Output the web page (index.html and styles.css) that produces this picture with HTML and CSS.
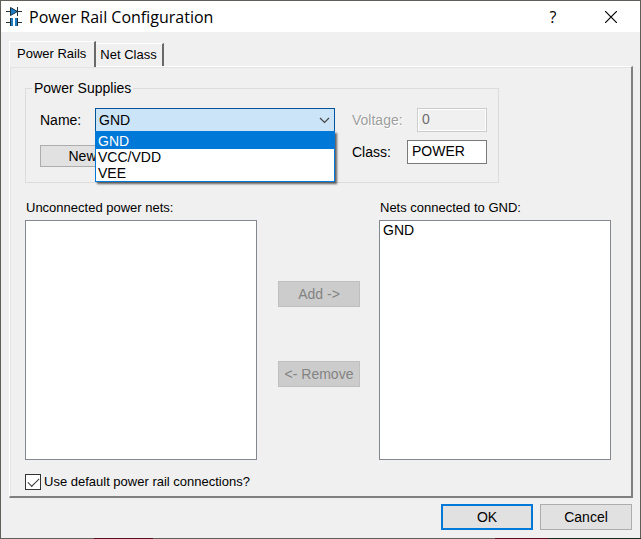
FILE: index.html
```
<!DOCTYPE html>
<html lang="en">
<head>
<meta charset="utf-8">
<title>Power Rail Configuration</title>
<link rel="stylesheet" href="styles.css">
</head>
<body>
<main class="dialog">
  <header class="titlebar">
    <svg class="app-icon" width="16" height="20" viewBox="0 0 16 20" aria-hidden="true">
      <path d="M0 4.500h16M0 15.500h4M12 15.500h4" stroke="#26313a" fill="none"/>
      <path d="M4.500 0.500v8l7-4z" fill="#1c7cc4" stroke="#16303f"/>
      <path d="M11.500 0v9" stroke="#16303f" fill="none"/>
      <path d="M4 11h3v8H4zM9 11h3v8H9z" fill="#1c7cc4"/>
      <path d="M4.500 11v8M11.500 11v8" stroke="#16303f" fill="none"/>
    </svg>
    <h1>Power Rail Configuration</h1>
    <button class="caption-button help" aria-label="Help">?</button>
    <button class="caption-button" aria-label="Close">
      <svg width="12" height="12" viewBox="0 0 12 12"><path d="M0 0l12 12M12 0L0 12" stroke="#000" stroke-width="1.200"/></svg>
    </button>
  </header>

  <div class="body">
    <div class="tabs" role="tablist">
      <button class="tab selected" role="tab" aria-selected="true">Power Rails</button>
      <button class="tab" role="tab" aria-selected="false">Net Class</button>
    </div>

    <section class="panel" role="tabpanel">
      <fieldset class="supplies">
        <legend>Power Supplies</legend>
        <div class="supply-main">
          <div class="name-row">
            <label for="name">Name:</label>
            <div class="combo">
              <select id="name">
                <option selected>GND</option>
                <option>VCC/VDD</option>
                <option>VEE</option>
              </select>
              <svg class="chevron" width="11" height="7" viewBox="0 0 11 7" aria-hidden="true"><path d="M1 1l4.500 4.500L10 1" fill="none" stroke="#444" stroke-width="1.200"/></svg>
              <ul class="menu" role="listbox" aria-label="Name">
                <li role="option" aria-selected="true" class="active">GND</li>
                <li role="option">VCC/VDD</li>
                <li role="option">VEE</li>
              </ul>
            </div>
          </div>
          <button class="button new">New</button>
        </div>
        <div class="supply-side">
          <div class="field disabled">
            <label for="voltage">Voltage:</label>
            <input id="voltage" class="short" type="text" value="0" disabled>
          </div>
          <div class="field">
            <label for="class">Class:</label>
            <input id="class" type="text" value="POWER">
          </div>
        </div>
      </fieldset>

      <div class="nets">
        <div class="net-list">
          <label for="free">Unconnected power nets:</label>
          <select id="free" size="4"></select>
        </div>
        <div class="transfer">
          <button class="button" disabled>Add -&gt;</button>
          <button class="button" disabled>&lt;- Remove</button>
        </div>
        <div class="net-list">
          <label for="connected">Nets connected to GND:</label>
          <select id="connected" size="4"><option>GND</option></select>
        </div>
      </div>

      <label class="check"><input type="checkbox" checked>Use default power rail connections?</label>
    </section>

    <footer class="actions">
      <button class="button primary">OK</button>
      <button class="button">Cancel</button>
    </footer>
  </div>
</main>
<div class="backdrop-edge"></div>
</body>
</html>
```
FILE: styles.css
```
* { box-sizing: border-box; }

body {
  margin: 0;
  background: #605f5a;
  color: #000;
  font: 14px/16px "Liberation Sans", Arial, sans-serif;
}

button, input, select {
  font: inherit;
  color: inherit;
  border-radius: 0;
  margin: 0;
}

.dialog {
  border: 1px solid #605f5a;
  border-bottom: 0;
  background: #f0f0f0;
}

.titlebar {
  display: flex;
  align-items: center;
  height: 31px;
  padding-left: 5px;
  background: #fff;
}

.app-icon { flex: none; }

h1 {
  flex: 1;
  margin: 0 0 0 7px;
  font: 400 16px/20px "Open Sans", "Noto Sans", sans-serif;
}

.caption-button {
  display: flex;
  align-items: center;
  justify-content: center;
  width: 58px;
  height: 30px;
  padding: 0;
  border: 0;
  background: none;
}

.help { font: 16px/20px "Open Sans", sans-serif; }

.body { padding: 9px 7px 8px 8px; }

.tabs {
  display: flex;
  align-items: flex-end;
  height: 25px;
}

.tab {
  height: 23px;
  padding: 0 5px 0 4px;
  border: solid;
  border-width: 1px 2px 0 0;
  border-color: #fff #696969 #fff #fff;
  background: #f0f0f0;
  font-size: 13px;
}

.tab.selected {
  position: relative;
  z-index: 1;
  height: 26px;
  margin-bottom: -1px;
  padding: 0 8px 2px 7px;
  border-left-width: 1px;
}

.panel {
  padding: 13px 20px 6px 15px;
  border: solid;
  border-width: 1px 2px 2px 1px;
  border-color: #fff #808080 #808080 #fff;
  box-shadow: inset 1px 1px #e3e3e3;
}

.supplies {
  position: relative;
  display: flex;
  gap: 17px;
  width: 474px;
  max-width: 100%;
  min-width: 0;
  margin: 0;
  padding: 12px 11px 15px 14px;
  border: 1px solid #dcdcdc;
}

legend {
  margin-left: -8px;
  padding: 0 2px;
}

.supply-main { flex: 1; }

.name-row {
  display: flex;
  align-items: center;
}

.name-row label { width: 55px; }

.combo {
  position: relative;
  flex: 1;
}

.combo select {
  display: block;
  appearance: none;
  width: 100%;
  height: 24px;
  padding: 0 3px;
  border: 1px solid #005499;
  background: #cce4f7;
}

.chevron {
  position: absolute;
  top: 9px;
  right: 5px;
}

.menu {
  position: absolute;
  z-index: 2;
  top: 23px;
  left: 0;
  right: 0;
  margin: 0;
  padding: 1px 0 0;
  border: 1px solid #0078d7;
  background: #fff;
  box-shadow: 2px 2px 2px rgba(0, 0, 0, .6);
  list-style: none;
}

.menu li { padding: 0 2px; }

.menu .active {
  background: #0078d7;
  color: #fff;
  box-shadow: 0 -1px #0078d7;
}

.button {
  height: 26px;
  padding: 0;
  border: 1px solid #adadad;
  background: #e1e1e1;
}

.button:disabled {
  border-color: #bfbfbf;
  background: #ccc;
  color: #838383;
}

.new {
  width: 85px;
  height: 22px;
  margin-top: 13px;
}

.supply-side {
  display: flex;
  flex-direction: column;
  gap: 8px;
  width: 135px;
}

.field {
  display: flex;
  align-items: center;
  justify-content: space-between;
}

.field input {
  width: 80px;
  height: 24px;
  padding: 0 4px 2px;
  border: 1px solid #7a7a7a;
  background: #fff;
}

.field .short { width: 70px; }

.disabled {
  color: #a0a0a0;
  text-shadow: 1px 1px #fff;
}

.disabled input {
  border-color: #ccc;
  background: #f0f0f0;
  box-shadow: inset 0 0 0 1px #fff;
  color: #6d6d6d;
}

.nets {
  display: flex;
  margin-top: 17px;
}

.net-list {
  flex: 1;
  display: flex;
  flex-direction: column;
  gap: 4px;
}

.net-list label {
  padding-left: 1px;
  font-size: 13px;
}

.net-list select {
  height: 240px;
  padding: 1px 0;
  border: 1px solid #828790;
  background: #fff;
  overflow: hidden;
}

.net-list option {
  min-height: 16px;
  padding: 0 3px;
}

.transfer {
  display: flex;
  flex-direction: column;
  justify-content: center;
  gap: 54px;
  width: 122px;
  padding: 8px 19px 0 21px;
}

.check {
  display: flex;
  align-items: center;
  gap: 3px;
  margin-top: 14px;
  font-size: 13px;
}

.check input {
  appearance: none;
  position: relative;
  width: 16px;
  height: 16px;
  border: 1px solid #333;
  background: #fff;
}

.check input:checked::after {
  content: "";
  position: absolute;
  top: 3px;
  left: 2px;
  width: 10px;
  height: 5px;
  border: solid #333;
  border-width: 0 0 1px 1px;
  transform: rotate(-45deg);
}

.actions {
  display: flex;
  justify-content: flex-end;
  gap: 7px;
  margin-top: 6px;
  padding-right: 1px;
}

.actions .button { width: 92px; }

.button.primary { border: 2px solid #0078d7; }

.backdrop-edge {
  height: 1px;
  background: linear-gradient(90deg, #605f5a 94px, #5c0c1c 94px 153px, #605f5a 153px 495px, #5c0c1c 495px 548px, #152c18 548px);
}
```
